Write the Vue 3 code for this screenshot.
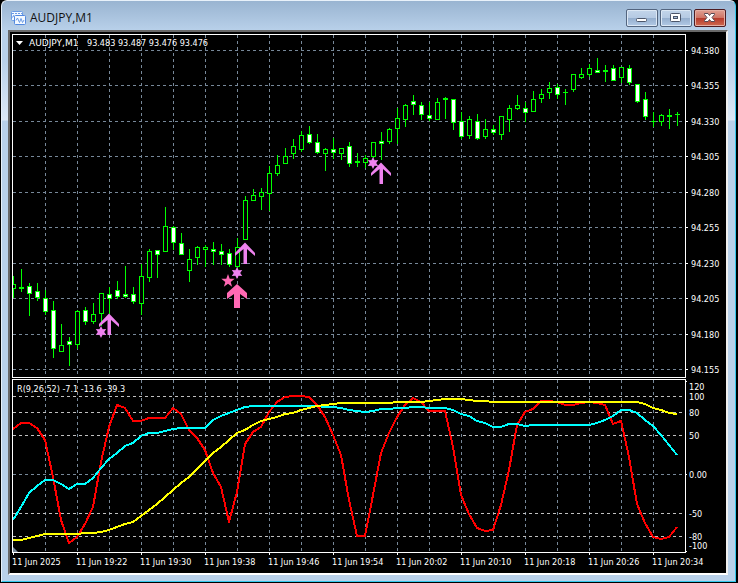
<script setup>
const title = 'AUDJPY,M1'

const xAt = (i) => 13 + 8 * i

// Each bar: wick top, body top, body bottom, wick bottom, kind (u = hollow, d = filled)
const bars = [
  [276, 284, 288, 297, 'u'], [269, 287, 288, 291, 'd'], [283, 286, 293, 315, 'd'], [283, 291, 297, 300, 'd'],
  [290, 298, 311, 314, 'd'], [301, 310, 348, 357, 'd'], [324, 345, 351, 351, 'u'], [337, 341, 344, 365, 'd'],
  [310, 311, 344, 348, 'u'], [307, 310, 321, 324, 'd'], [303, 314, 321, 323, 'u'], [293, 293, 313, 325, 'u'],
  [287, 294, 298, 313, 'd'], [281, 290, 296, 298, 'd'], [266, 294, 296, 297, 'd'], [287, 294, 301, 303, 'd'],
  [264, 276, 303, 314, 'u'], [249, 251, 277, 281, 'u'], [250, 250, 254, 277, 'd'], [207, 226, 251, 251, 'u'],
  [226, 227, 242, 249, 'd'], [233, 243, 254, 254, 'd'], [249, 259, 270, 281, 'u'], [246, 247, 257, 264, 'u'],
  [245, 247, 249, 266, 'u'], [242, 249, 251, 264, 'd'], [244, 251, 254, 264, 'd'], [249, 253, 264, 266, 'd'],
  [238, 247, 266, 269, 'u'], [196, 200, 239, 239, 'u'], [189, 195, 200, 200, 'u'], [188, 192, 196, 209, 'u'],
  [166, 173, 193, 210, 'u'], [155, 165, 173, 175, 'u'], [148, 156, 163, 163, 'u'], [139, 146, 153, 158, 'u'],
  [131, 135, 149, 151, 'u'], [126, 134, 142, 143, 'd'], [134, 142, 152, 153, 'd'], [148, 149, 153, 170, 'u'],
  [138, 149, 152, 158, 'd'], [148, 148, 153, 159, 'u'], [142, 146, 163, 166, 'd'], [153, 161, 162, 166, 'd'],
  [155, 158, 162, 167, 'u'], [142, 142, 156, 157, 'u'], [132, 141, 143, 159, 'd'], [128, 129, 141, 143, 'u'],
  [108, 118, 128, 143, 'u'], [104, 105, 119, 126, 'u'], [95, 101, 104, 114, 'd'], [102, 105, 114, 119, 'd'],
  [102, 115, 118, 120, 'd'], [98, 102, 119, 119, 'u'], [97, 98, 99, 118, 'd'], [99, 99, 122, 129, 'd'],
  [112, 121, 136, 138, 'd'], [116, 119, 135, 138, 'u'], [114, 121, 138, 139, 'd'], [119, 129, 136, 138, 'u'],
  [125, 129, 132, 134, 'd'], [116, 116, 134, 139, 'u'], [105, 108, 119, 131, 'u'], [95, 105, 108, 109, 'u'],
  [102, 108, 112, 121, 'd'], [91, 99, 111, 111, 'u'], [89, 94, 98, 102, 'u'], [82, 88, 92, 98, 'u'],
  [84, 87, 94, 98, 'd'], [89, 92, 92, 104, 'd'], [74, 74, 89, 91, 'u'], [68, 74, 77, 78, 'u'],
  [64, 68, 74, 76, 'u'], [58, 70, 72, 72, 'd'], [65, 70, 71, 81, 'd'], [65, 68, 80, 80, 'd'],
  [67, 67, 77, 82, 'u'], [65, 68, 82, 84, 'd'], [84, 84, 101, 102, 'd'], [92, 99, 116, 119, 'd'],
  [112, 121, 121, 126, 'd'], [114, 115, 121, 125, 'u'], [109, 115, 116, 128, 'd'], [112, 114, 114, 125, 'd']
].map(([high, top, bottom, low, kind], i) => ({
  x: xAt(i), high, top, height: bottom - top + 1, wick: low - high + 1, kind
}))

const toLine = (values) => values.map((y, i) => `${xAt(i)},${y}`).join(' ')

const fast = toLine([
  429, 423, 423, 428, 440, 477, 520, 543, 537, 524, 507, 462, 427, 405, 408, 421, 421, 418, 418, 418, 408,
  414, 430, 438, 450, 473, 487, 522, 492, 444, 432, 427, 412, 402, 397, 396, 396, 397, 405, 417, 435, 455,
  500, 536, 536, 495, 453, 433, 417, 405, 398, 402, 411, 411, 411, 447, 495, 514, 528, 531, 530, 505, 470,
  425, 412, 409, 401, 401, 402, 405, 405, 403, 402, 403, 405, 424, 421, 457, 504, 523, 537, 539, 537, 527
])
const medium = toLine([
  520, 507, 493, 486, 480, 480, 484, 489, 484, 484, 478, 468, 459, 453, 446, 443, 436, 433, 433, 431, 429,
  428, 428, 428, 428, 420, 416, 413, 410, 407, 406, 406, 406, 406, 406, 406, 406, 406, 406, 407, 407, 408,
  410, 411, 412, 411, 409, 409, 408, 408, 407, 407, 408, 408, 408, 410, 414, 416, 421, 423, 427, 427, 424,
  424, 426, 425, 425, 425, 425, 425, 425, 425, 425, 423, 420, 416, 410, 410, 413, 420, 426, 435, 445, 455
])
const slow = toLine([
  540, 540, 538, 536, 534, 534, 534, 534, 534, 533, 533, 532, 530, 527, 524, 522, 516, 510, 504, 497, 490,
  483, 477, 469, 461, 453, 447, 440, 433, 430, 425, 421, 419, 417, 414, 413, 410, 408, 406, 405, 404, 403,
  403, 403, 403, 403, 403, 403, 402, 402, 402, 402, 401, 400, 399, 399, 399, 400, 401, 401, 402, 402, 402,
  402, 402, 402, 402, 402, 402, 402, 402, 402, 402, 402, 402, 402, 402, 402, 402, 404, 408, 410, 413, 414
])

const prices = [
  [50, '94.380'], [85, '94.355'], [121, '94.330'], [156, '94.305'], [192, '94.280'],
  [227, '94.255'], [263, '94.230'], [298, '94.205'], [334, '94.180'], [369, '94.155']
]
const levels = [
  [396, true], [412, true], [435, true], [474, false], [513, true], [536, true]
]
const levelLabels = [
  [386, '120'], [396, '100'], [412, '80'], [435, '50'], [474, '0.00'], [513, '-50'], [536, '-80'], [545, '-100']
]
const columns = Array.from({ length: 20 }, (_, i) => 45 + 32 * i)
const times = [
  '11 Jun 2025', '11 Jun 19:22', '11 Jun 19:30', '11 Jun 19:38', '11 Jun 19:46', '11 Jun 19:54',
  '11 Jun 20:02', '11 Jun 20:10', '11 Jun 20:18', '11 Jun 20:26', '11 Jun 20:34'
].map((text, i) => ({ text, x: 13 + 64 * i }))

const arrows = [[109, 314], [245, 243], [381, 163]]
const sparks = [[101, 332], [237, 273], [373, 163]]
</script>

<template>
  <div class="desktop">
    <section class="window">
      <header class="titlebar">
        <svg class="app-icon" width="15" height="14" viewBox="0 0 15 14" aria-hidden="true">
          <rect x="0.5" y="0.5" width="11" height="9" rx="1" fill="#f4f9ff" stroke="#6b9ce6" />
          <path d="M1 2.500h10" stroke="#6b9ce6" stroke-dasharray="2 1" />
          <path d="M1.500 6.500l1-2 1 2" fill="none" stroke="#6b9ce6" />
          <rect x="3.500" y="4.500" width="11" height="9" rx="1" fill="#f4f9ff" stroke="#5288de" />
          <path d="M5 9.500l1.500-2.500 2 4.500 1.500-4 1.500 4 1.500-2.500" fill="none" stroke="#6b9ce6" />
        </svg>
        <h1>{{ title }}</h1>
        <div class="controls">
          <button type="button" aria-label="Minimize">
            <svg width="30" height="16" viewBox="0 0 30 16" aria-hidden="true">
              <rect x="9.500" y="8.500" width="10" height="3" rx="1" fill="#fff" stroke="#4c566a" />
            </svg>
          </button>
          <button type="button" aria-label="Maximize">
            <svg width="30" height="16" viewBox="0 0 30 16" aria-hidden="true">
              <rect x="9.500" y="3.500" width="10" height="8" rx="1" fill="#fff" stroke="#4c566a" />
              <rect x="12.500" y="6.500" width="4" height="2" fill="#a9bfda" stroke="#4c566a" />
            </svg>
          </button>
          <button type="button" class="close" aria-label="Close">
            <svg width="30" height="16" viewBox="0 0 30 16" aria-hidden="true">
              <path
                d="M9.500 3.500h3.500l1.500 2 1.500-2h3.500v1l-2.500 3 2.500 3v1h-3.500l-1.500-2-1.500 2h-3.500v-1l2.500-3-2.500-3z"
                fill="#fff" stroke="#5a4a55"
              />
            </svg>
          </button>
        </div>
      </header>

      <main class="client">
        <svg class="chart" viewBox="10 32 716 541" role="img" aria-label="AUDJPY one minute chart">
          <defs>
            <clipPath id="plot"><rect x="13" y="35" width="672" height="517" /></clipPath>
          </defs>

          <g class="grid">
            <template v-for="x in columns" :key="x">
              <path :d="`M${x + 0.5} 35V377M${x + 0.5} 380V552`" />
            </template>
            <path v-for="[y] in prices" :key="y" :d="`M13 ${y + 0.5}H685`" />
            <path
              v-for="[y, strong] in levels" :key="y"
              :class="{ level: strong }" :d="`M13 ${y + 0.5}H685`"
            />
          </g>

          <g clip-path="url(#plot)" class="bars">
            <template v-for="bar in bars" :key="bar.x">
              <rect class="outline" :x="bar.x" :y="bar.high" width="1" :height="bar.wick" />
              <rect class="outline" :x="bar.x - 2" :y="bar.top" width="5" :height="bar.height" />
              <rect
                v-if="bar.height > 2" :class="bar.kind === 'u' ? 'up' : 'down'"
                :x="bar.x - 1" :y="bar.top + 1" width="3" :height="bar.height - 2"
              />
            </template>
          </g>

          <g clip-path="url(#plot)" class="lines">
            <polyline class="fast" :points="fast" />
            <polyline class="medium" :points="medium" />
            <polyline class="slow" :points="slow" />
          </g>

          <g class="frames">
            <rect x="12.500" y="34.500" width="673" height="343" />
            <rect x="12.500" y="379.500" width="673" height="173" />
            <path v-for="[y] in prices" :key="y" :d="`M686 ${y + 0.5}h2`" />
            <path d="M686 381.500h1M686 474.500h1M686 551.500h1" />
            <path v-for="time in times" :key="time.x" :d="`M${time.x + 0.5} 553v2`" />
          </g>
          <path class="corner" d="M13 547v5h5z" />

          <g class="signals">
            <path
              v-for="[x, y] in arrows" :key="x"
              :transform="`translate(${x} ${y})`"
              d="M0-0.500L10 10V13L2 6V21H-1.500V6L-10 13V10Z"
            />
            <path
              v-for="[x, y] in sparks" :key="x"
              :transform="`translate(${x} ${y})`"
              d="M0-6L1.600-2.700L5.200-3L3.200 0L5.200 3L1.600 2.700L0 6L-1.600 2.700L-5.200 3L-3.200 0L-5.200-3L-1.600-2.700Z"
            />
            <path
              class="strong" transform="translate(237 284)"
              d="M0 0L10 9V15L3 10V24H-3V10L-10 15V9Z"
            />
            <path
              class="strong" transform="translate(228 281)"
              d="M0-7L1.700-2.300L6.700-2.200L2.700 0.900L4.100 5.700L0 2.800L-4.100 5.700L-2.700 0.900L-6.700-2.200L-1.700-2.300Z"
            />
          </g>

          <g class="labels">
            <path d="M16 41h7l-3.500 4z" />
            <text class="symbol" x="29" y="46">AUDJPY,M1</text>
            <text x="87" y="46">93.483 93.487 93.476 93.476</text>
            <text x="17" y="392">R(9,26,52) -7.1 -13.6 -39.3</text>
            <text v-for="[y, text] in prices" :key="text" x="691" :y="y + 4">{{ text }}</text>
            <text v-for="[y, text] in levelLabels" :key="text" x="689" :y="y + 4">{{ text }}</text>
            <text v-for="time in times" :key="time.text" :x="time.x - 1" y="565">{{ time.text }}</text>
          </g>
        </svg>
      </main>
    </section>
  </div>
</template>

<style>
body {
  margin: 0;
  background: #000;
}
</style>

<style scoped>
.desktop {
  background: #000;
  padding: 0 2px 1px 1px;
}

.window {
  box-sizing: border-box;
  padding: 0 7px 6px 6px;
  border: 1px solid #e8f1fa;
  border-right-color: #35c8ec;
  border-bottom-color: #35c8ec;
  border-radius: 6px 6px 0 0;
  background:
    linear-gradient(#99b4d1 0, #b9d1ea 30px, #b9d1ea 60px, #dce8f5 119px, #b9d1ea 120px, #b9d1ea 100%);
}

.titlebar {
  display: flex;
  align-items: center;
  gap: 4px;
  height: 29px;
  padding: 5px 0 0 3px;
  box-sizing: border-box;
}

h1 {
  flex: 1;
  margin: 0;
  color: #111;
  font: 400 12px/20px "Open Sans", "Noto Sans", sans-serif;
}

.controls {
  display: flex;
  gap: 2px;
  padding-right: 2px;
}

button {
  width: 32px;
  height: 18px;
  padding: 0;
  border: 1px solid #53657f;
  border-radius: 2px;
  background: linear-gradient(#c3d5ea 0, #b5cae3 48%, #94aecd 50%, #b2cae6 100%);
  box-shadow: inset 0 0 0 1px #dce8f5;
}

button svg {
  display: block;
}

.close {
  border-color: #4d1c22;
  background: linear-gradient(#e0a093 0, #cf7465 48%, #b5382a 50%, #cf6a50 100%);
  box-shadow: inset 0 0 0 1px #e5aea3;
}

.client {
  border: 2px solid #fff;
  border-top-color: #696969;
  border-left-color: #696969;
  border-right-color: #f0f0f0;
  background: #000;
}

.chart {
  display: block;
  width: 100%;
  height: auto;
}

.grid path {
  fill: none;
  stroke: #778899;
  stroke-dasharray: 3 3;
  shape-rendering: crispEdges;
}

.grid .level {
  stroke: #c0c0c0;
}

.bars {
  shape-rendering: crispEdges;
}

.outline {
  fill: #00ff00;
}

.up {
  fill: #000;
}

.down {
  fill: #fff;
}

.lines polyline {
  fill: none;
  stroke-width: 2;
  stroke-linejoin: round;
  shape-rendering: crispEdges;
}

.lines .fast {
  stroke: #ff0000;
}

.lines .medium {
  stroke: #00ffff;
}

.lines .slow {
  stroke: #ffff00;
}

.frames rect,
.frames path {
  fill: none;
  stroke: #fff;
  shape-rendering: crispEdges;
}

.corner {
  fill: #778899;
}

.signals {
  fill: #ee82ee;
}

.signals .strong {
  fill: #ff69b4;
}

.labels {
  fill: #fff;
  font: 9px "DejaVu Sans Condensed", "DejaVu Sans", sans-serif;
}

.labels .symbol {
  font-family: "DejaVu Sans", sans-serif;
}
</style>
